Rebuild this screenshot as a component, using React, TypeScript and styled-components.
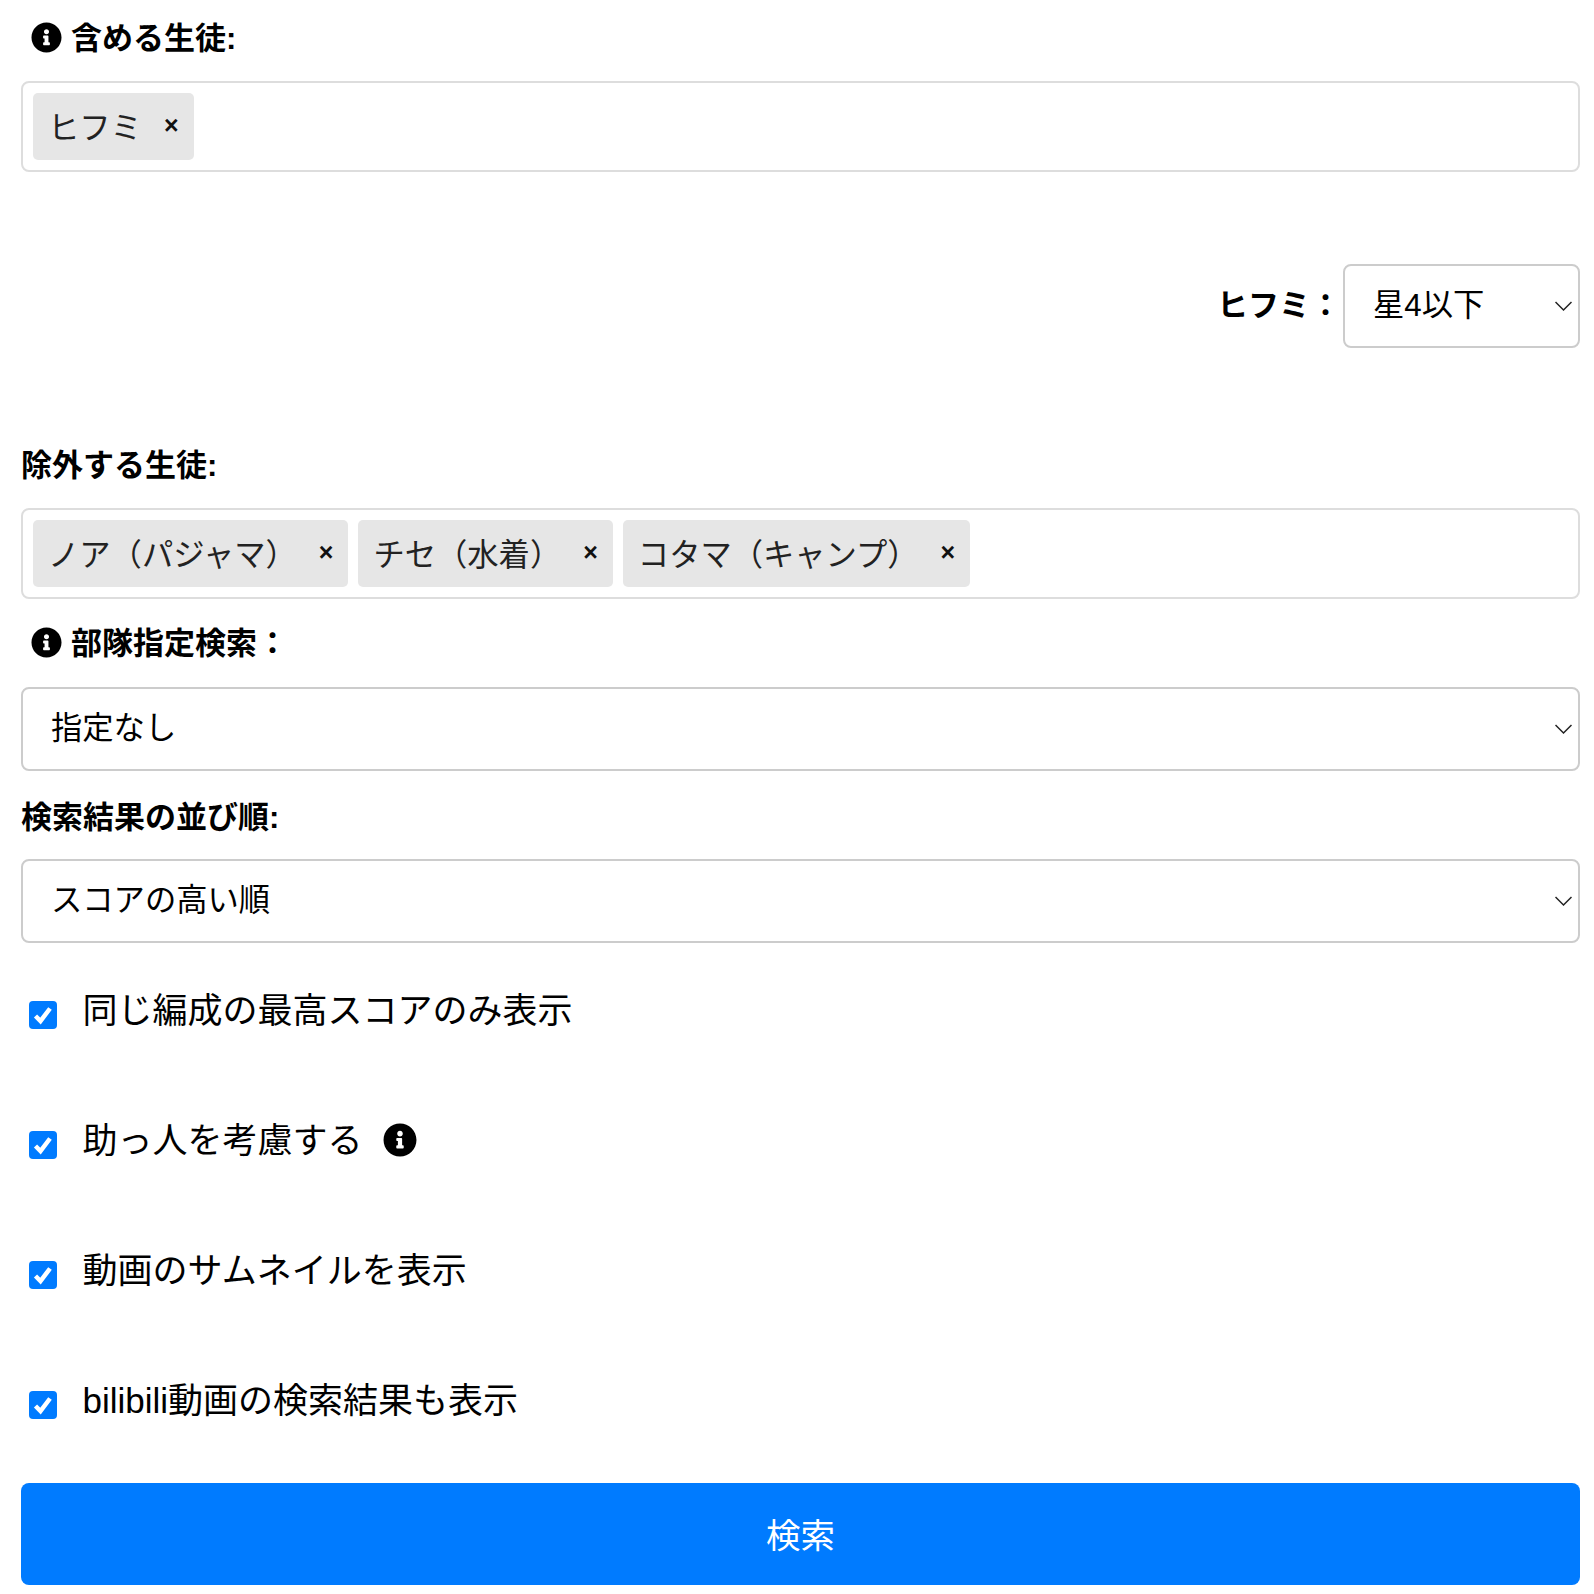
import styled, { createGlobalStyle } from "styled-components"
import { FaInfoCircle } from "react-icons/fa"

const GlobalStyle = createGlobalStyle`
  html, body {
    margin: 0;
    padding: 0;
    background: #fff;
  }
  body {
    font-family: "Liberation Sans", "Noto Sans CJK JP", sans-serif;
    color: #000;
  }
`

const Wrapper = styled.div`
  width: 1594px;
  box-sizing: border-box;
  padding: 0 14px 0 21px;
  display: flex;
  flex-direction: column;
`

const Label = styled.div<{ $indent?: boolean; $top: number; $bottom: number }>`
  display: flex;
  align-items: center;
  gap: 9px;
  height: 40px;
  margin-top: ${(p) => p.$top}px;
  margin-bottom: ${(p) => p.$bottom}px;
  padding-left: ${(p) => (p.$indent ? 10 : 0)}px;
  font-size: 31px;
  font-weight: 700;
`

const LabelText = styled.span`
  margin-top: -4px;
`

const Info = styled(FaInfoCircle)<{ $size: number }>`
  width: ${(p) => p.$size}px;
  height: ${(p) => p.$size}px;
  flex: none;
`

const InlineInfo = styled(Info)`
  margin-top: 4px;
`

const TagBox = styled.div`
  box-sizing: border-box;
  height: 91px;
  border: 2px solid #ddd;
  border-radius: 8px;
  padding: 10px;
  display: flex;
  gap: 10px;
`

const Tag = styled.div`
  height: 67px;
  box-sizing: border-box;
  background: #e6e6e6;
  border-radius: 5px;
  padding: 0 15px 3px 15px;
  display: flex;
  align-items: center;
  justify-content: space-between;
  gap: 22px;
  font-size: 31.3px;
  color: #222;
`

const Remove = styled.span`
  font-size: 25px;
  font-weight: 700;
  color: #111;
`

const SelectRow = styled.div`
  display: flex;
  justify-content: flex-end;
  align-items: center;
  gap: 2px;
  margin-top: 92px;
`

const RowLabel = styled.div`
  font-size: 31px;
  font-weight: 700;
  padding-bottom: 8px;
`

const SelectWrap = styled.div<{ $width?: number }>`
  position: relative;
  width: ${(p) => (p.$width ? `${p.$width}px` : "100%")};
`

const Select = styled.select`
  appearance: none;
  display: block;
  width: 100%;
  height: 84px;
  box-sizing: border-box;
  padding: 0 28px 2px;
  border: 2px solid #ccc;
  border-radius: 8px;
  background: #fff;
  font: inherit;
  font-size: 31.3px;
  color: #000;
`

const Chevron = styled.svg`
  position: absolute;
  right: 8px;
  top: 34px;
  width: 17px;
  height: 15px;
  fill: none;
  stroke: #222;
  stroke-width: 1.5;
  pointer-events: none;
`

const CheckRow = styled.label`
  display: flex;
  align-items: center;
  height: 130px;
  padding-left: 8px;
  gap: 25.5px;
  font-size: 35px;
`

const CheckList = styled.div`
  margin-top: 3px;
`

const CheckBoxWrap = styled.span`
  position: relative;
  width: 28px;
  height: 28px;
  flex: none;
  margin-top: 8px;
`

const CheckInput = styled.input`
  appearance: none;
  display: block;
  margin: 0;
  width: 28px;
  height: 28px;
  border-radius: 4px;
  background: #007bff;
`

const CheckMark = styled.svg`
  position: absolute;
  inset: 0;
  width: 28px;
  height: 28px;
  fill: none;
  stroke: #fff;
  stroke-width: 4.5;
  pointer-events: none;
`

const CheckText = styled.span`
  display: flex;
  align-items: center;
  gap: 20px;
  margin-top: -7px;
`

const SearchButton = styled.button`
  display: block;
  width: 100%;
  height: 102px;
  margin-top: 17px;
  padding: 0 0 3px;
  border: none;
  border-radius: 8px;
  background: #007bff;
  color: #fff;
  font: inherit;
  font-size: 34.5px;
`

function TagItem({ name }: { name: string }) {
  return (
    <Tag>
      <span>{name}</span>
      <Remove>×</Remove>
    </Tag>
  )
}

function Dropdown({ value, width }: { value: string; width?: number }) {
  return (
    <SelectWrap $width={width}>
      <Select defaultValue={value}>
        <option>{value}</option>
      </Select>
      <Chevron viewBox="0 0 17 15">
        <path d="M0.5 4 L8.5 12 L16.5 4" />
      </Chevron>
    </SelectWrap>
  )
}

function CheckItem({ text, info }: { text: string; info?: boolean }) {
  return (
    <CheckRow>
      <CheckBoxWrap>
        <CheckInput type="checkbox" defaultChecked />
        <CheckMark viewBox="0 0 28 28">
          <path d="M6.5 15 L11.5 20 L21 7.5" />
        </CheckMark>
      </CheckBoxWrap>
      <CheckText>
        {text}
        {info && <InlineInfo $size={34} />}
      </CheckText>
    </CheckRow>
  )
}

export default function App() {
  return (
    <Wrapper>
      <GlobalStyle />
      <Label $indent $top={17} $bottom={24}>
        <Info $size={31} />
        <LabelText>含める生徒:</LabelText>
      </Label>
      <TagBox>
        <TagItem name="ヒフミ" />
      </TagBox>
      <SelectRow>
        <RowLabel>ヒフミ：</RowLabel>
        <Dropdown value="星4以下" width={237} />
      </SelectRow>
      <Label $top={96} $bottom={24}>
        <LabelText>除外する生徒:</LabelText>
      </Label>
      <TagBox>
        <TagItem name="ノア（パジャマ）" />
        <TagItem name="チセ（水着）" />
        <TagItem name="コタマ（キャンプ）" />
      </TagBox>
      <Label $indent $top={23} $bottom={25}>
        <Info $size={31} />
        <LabelText>部隊指定検索：</LabelText>
      </Label>
      <Dropdown value="指定なし" />
      <Label $top={25} $bottom={23}>
        <LabelText>検索結果の並び順:</LabelText>
      </Label>
      <Dropdown value="スコアの高い順" />
      <CheckList>
        <CheckItem text="同じ編成の最高スコアのみ表示" />
        <CheckItem text="助っ人を考慮する" info />
        <CheckItem text="動画のサムネイルを表示" />
        <CheckItem text="bilibili動画の検索結果も表示" />
      </CheckList>
      <SearchButton>検索</SearchButton>
    </Wrapper>
  )
}
